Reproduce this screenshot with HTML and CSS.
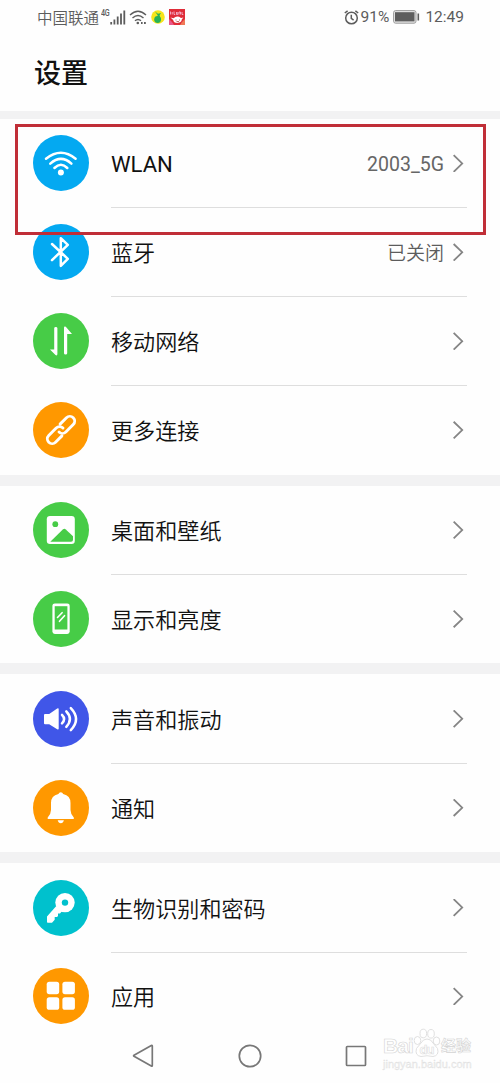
FILE: index.html
```html
<!DOCTYPE html>
<html lang="zh">
<head>
  <meta charset="UTF-8">
  <meta name="viewport" content="width=device-width, initial-scale=1.0">
  <title>设置</title>
  <link rel="stylesheet" href="styles.css">
</head>
<body>

  <!-- 状态栏 -->
  <div class="status">
    <span class="carrier">中国联通</span>
    <span class="net">4G</span>
    <svg class="signal" width="16" height="15" viewBox="0 0 16 15">
      <path d="M1.2 12v2.5M4.4 9.5v5M7.7 6.5v8M11 3.5v11M14.3.5v14" stroke="#5c5c5c" stroke-width="1.8"/>
    </svg>
    <svg class="wifi" width="18" height="15" viewBox="0 0 18 15" fill="none" stroke="#5c5c5c" stroke-width="1.4">
      <path d="M1 5Q9-2.6 17 5M3.5 8Q9 2.8 14.5 8M6 10.8Q9 8 12 10.8"/>
      <circle cx="8.8" cy="13" r="1.3" fill="#5c5c5c" stroke="none"/>
      <path d="M12 13h1.6M15 13h1.8" stroke-width="1.8"/>
    </svg>
    <svg class="music" width="14" height="14" viewBox="0 0 14 14">
      <circle cx="7" cy="7" r="6.8" fill="#f6e51b"/>
      <circle cx="6.6" cy="9.5" r="3.4" fill="#28b258"/>
      <path d="M4 1.5l3 2.2L10 3 8.6 5.3l1.2 4.5H8.2L6.3 4.8z" fill="#28b258"/>
    </svg>
    <svg class="shop" width="16" height="16" viewBox="0 0 16 16">
      <rect width="16" height="16" fill="#df2c38"/>
      <path d="M0 10l3 3 2 3H0z" fill="#e9588a"/>
      <path d="M16 10l-3 3-2 3h5z" fill="#ef7957"/>
      <path d="M1.5 2.5v3M3.2 3v2.5M5 2.5v3h1.2M7.5 3v2.5h1.3V3M10 5.5V3h1.5v2.5M13 3v2.5h1.3" stroke="#f3b6cf" stroke-width=".9" fill="none"/>
      <path d="M1.5 8.5l3 .8Q8 6 12 9l2.3-.6-1.5 2.2Q12.5 13.8 8.5 14 4.5 13.8 4.2 11z" fill="#fff"/>
      <path d="M7 10.5v1M10.5 10.5v1M7.5 12.6h2.5" stroke="#a33" stroke-width=".8"/>
    </svg>
    <svg class="alarm" width="15" height="15" viewBox="0 0 15 15" fill="none" stroke="#5c5c5c" stroke-width="1.5">
      <circle cx="7.5" cy="8" r="5.8"/>
      <path d="M7.3 4.8v3.6l2.3 1.7M.8 3L3.6.9M14.2 3L11.4.9"/>
    </svg>
    <span class="percent">91%</span>
    <svg class="battery" width="27" height="14" viewBox="0 0 27 14">
      <rect x=".6" y=".6" width="22.4" height="12.6" rx="2" fill="#e5e5e5" stroke="#9b9b9b"/>
      <rect x="2" y="2.2" width="19.5" height="9.2" fill="#5e5e5e"/>
      <path d="M25.3 3.5v7" stroke="#5e5e5e" stroke-width="1.6"/>
    </svg>
    <span class="time">12:49</span>
  </div>

  <h1>设置</h1>

  <div class="group">
    <div class="row">
      <svg class="icon blue" viewBox="0 0 56 56">
        <path d="M13 23.8Q28 11.8 42.6 23.8M17.3 28.6Q28 19.2 38.4 28.6M21.4 33Q28 26.6 34.3 33" class="line"/>
        <circle cx="27.9" cy="37.4" r="3"/>
      </svg>
      <div class="cell"><span class="name latin">WLAN</span><span class="value latin">2003_5G</span><i class="arrow"></i></div>
    </div>
    <div class="row">
      <svg class="icon blue" viewBox="0 0 56 56">
        <path d="M19 20L34.8 34.8 27.8 41.8V14.2L34.8 20.8 19 36.2" class="line"/>
      </svg>
      <div class="cell"><span class="name">蓝牙</span><span class="value">已关闭</span><i class="arrow"></i></div>
    </div>
    <div class="row">
      <svg class="icon green" viewBox="0 0 56 56">
        <path d="M21.2 15.2q0-1.3 1.6-1.3t1.6 1.3v25.6q0 2.3-1.9 1.3L17 36.5h4.2z"/>
        <path d="M34.2 40.3q0 1.3-1.6 1.3t-1.6-1.3V15q0-2 1.8-1.2L39 21h-4.8z"/>
      </svg>
      <div class="cell"><span class="name">移动网络</span><i class="arrow"></i></div>
    </div>
    <div class="row">
      <svg class="icon orange" viewBox="0 0 56 56">
        <g transform="rotate(-45 28 28)" class="line thick">
          <path d="M24.5 32.8H15.5a4.8 4.8 0 0 1 0-9.6H26a4.8 4.8 0 0 1 4.8 4.8"/>
          <path d="M31.5 23.2H40.5a4.8 4.8 0 0 1 0 9.6H30a4.8 4.8 0 0 1-4.8-4.8"/>
        </g>
      </svg>
      <div class="cell"><span class="name">更多连接</span><i class="arrow"></i></div>
    </div>
  </div>

  <div class="group">
    <div class="row">
      <svg class="icon green" viewBox="0 0 56 56">
        <rect x="13.8" y="14" width="28" height="28" rx="3.2"/>
        <circle cx="22.3" cy="22.2" r="2.9" class="hole"/>
        <path d="M17.3 39.8L29.8 27.4q1.5-1.4 3 0L40 34.2v3.6q0 2-2 2z" class="hole"/>
      </svg>
      <div class="cell"><span class="name">桌面和壁纸</span><i class="arrow"></i></div>
    </div>
    <div class="row">
      <svg class="icon green" viewBox="0 0 56 56">
        <rect x="19.4" y="12.4" width="17.3" height="30.6" rx="2.4"/>
        <rect x="21.7" y="15.2" width="12.7" height="23.3" class="hole"/>
        <path d="M24.5 26.5l4.6-4.8M26.5 30.3l5-5.6" class="line thin"/>
      </svg>
      <div class="cell"><span class="name">显示和亮度</span><i class="arrow"></i></div>
    </div>
  </div>

  <div class="group">
    <div class="row">
      <svg class="icon indigo" viewBox="0 0 56 56">
        <path d="M12 23h4.2l8-5.6q1.5-.8 1.5.8v19.3q0 1.6-1.5.8l-8-5.1H12q-1 0-1-1v-8.2q0-1 1-1z"/>
        <path d="M29 23.8q4.2 4.2 0 8.6M33.3 20.4q7.2 7.7 0 15.4M37.8 17.1q10.5 11 0 22" class="line"/>
      </svg>
      <div class="cell"><span class="name">声音和振动</span><i class="arrow"></i></div>
    </div>
    <div class="row">
      <svg class="icon orange" viewBox="0 0 56 56">
        <path d="M27.8 12.2q1.7 0 2.4 1.9 7.3 1.7 7.3 8.9v7q0 4 3.3 7.4v1.5H14.7v-1.5q3.3-3.4 3.3-7.4v-7q0-7.2 7.4-8.9.7-1.9 2.4-1.9z"/>
        <path d="M24.7 40.2h6.2q-.8 3-3.1 3t-3.1-3z"/>
      </svg>
      <div class="cell"><span class="name">通知</span><i class="arrow"></i></div>
    </div>
  </div>

  <div class="group">
    <div class="row">
      <svg class="icon cyan" viewBox="0 0 56 56">
        <path d="M23.3 26L14 36.5v5.5q0 .8.8.8h4.2l2.7-3v-2.8h2.3l1-1v-2.5h2l3-3.5z"/>
        <circle cx="32" cy="22.6" r="9.7"/>
        <circle cx="32" cy="22.6" r="3.2" class="hole"/>
      </svg>
      <div class="cell"><span class="name">生物识别和密码</span><i class="arrow"></i></div>
    </div>
    <div class="row">
      <svg class="icon orange" viewBox="0 0 56 56">
        <rect x="13.7" y="13.7" width="12.5" height="12.5" rx="2.6"/>
        <rect x="29.4" y="13.7" width="12.5" height="12.5" rx="2.6"/>
        <rect x="13.7" y="29.3" width="12.5" height="12.5" rx="2.6"/>
        <rect x="29.4" y="29.3" width="12.5" height="12.5" rx="2.6"/>
      </svg>
      <div class="cell"><span class="name">应用</span><i class="arrow"></i></div>
    </div>
  </div>

  <!-- 底部导航 -->
  <div class="nav">
    <svg width="24" height="26" viewBox="0 0 24 26"><path d="M2 12.3L19.3 2.5q1-.5 1 .6v19.4q0 1.1-1 .6L2 13.3q-.8-.5 0-1z"/></svg>
    <svg width="24" height="26" viewBox="0 0 24 26"><circle cx="12" cy="13" r="10.7"/></svg>
    <svg width="24" height="26" viewBox="0 0 24 26"><rect x="2.5" y="3.5" width="19" height="19" rx=".8"/></svg>
  </div>

  <!-- WLAN 标注框 -->
  <div class="mark"></div>

  <div class="watermark">
    <div class="brand">
      <span>Bai</span>
      <svg width="28" height="30" viewBox="0 0 28 30">
        <ellipse cx="4.5" cy="12.5" rx="3.3" ry="4"/>
        <ellipse cx="10.3" cy="5.5" rx="3.3" ry="4.3"/>
        <ellipse cx="18" cy="5.8" rx="3.3" ry="4.3"/>
        <ellipse cx="23.5" cy="13" rx="3.3" ry="4"/>
        <path d="M14 11q4 0 6 4l4.5 5.5q2 7-4.5 8-6-1.5-12 0-6.5-1-4.5-8L8 15q2-4 6-4z"/>
        <text x="6.5" y="26">du</text>
      </svg>
      <span class="cn">经验</span>
    </div>
    <div class="site">jingyan.baidu.com</div>
  </div>

</body>
</html>
```
FILE: styles.css
```css
body {
  margin: 0;
  width: 500px;
  height: 1083px;
  position: relative;
  overflow: hidden;
  background-color: #fefefe;
  color: #111;
  font-family: Roboto, "Noto Sans CJK SC", sans-serif;
}
.status {
  display: flex;
  align-items: center;
  height: 34px;
  padding: 0 36px 0 37px;
  font-size: 15.5px;
  color: #5c5c5c;
}
.status svg {
  flex: none;
}
.carrier {
  margin-top: -1px;
  font-weight: 350;
}
.net {
  margin: -9px 0 0 2px;
  font-size: 9px;
  font-weight: 500;
  line-height: 8px;
  width: 11px;
  letter-spacing: -0.3px;
  transform: scaleX(0.8);
  transform-origin: left;
}
.signal {
  margin-left: -2px;
}
.wifi {
  margin-left: 3px;
}
.music {
  margin-left: 4px;
}
.shop {
  margin-left: 4px;
}
.alarm {
  margin-left: auto;
}
.percent {
  margin-left: 2px;
}
.battery {
  margin: 0 5px 0 4px;
}
h1 {
  margin: 0;
  height: 77px;
  padding-left: 34px;
  font-size: 27px;
  font-weight: 500;
  line-height: 80px;
  box-sizing: border-box;
}
.group {
  border-top: 11px solid #f2f2f3;
}
h1 + .group {
  border-top-width: 8px;
}
.row {
  display: flex;
  align-items: center;
  height: 88.9px;
  padding: 0 33px;
}
.icon {
  width: 56px;
  height: 56px;
  flex: none;
  border-radius: 50%;
  fill: #fff;
}
.line {
  fill: none;
  stroke: #fff;
  stroke-width: 2.5;
  stroke-linecap: round;
  stroke-linejoin: round;
}
.thin {
  stroke-width: 1.6;
}
.thick {
  stroke-width: 2.9;
}
.blue {
  background-color: #04a9f1;
}
.green {
  background-color: #47cc47;
}
.green .hole {
  fill: #47cc47;
}
.orange {
  background-color: #ff9800;
}
.indigo {
  background-color: #4056e8;
}
.cyan {
  background-color: #00c1cd;
}
.cyan .hole {
  fill: #00c1cd;
}
.cell {
  display: flex;
  align-items: center;
  flex: 1;
  box-sizing: border-box;
  height: 100%;
  margin: 1px 0 0 22px;
  padding-right: 3px;
  border-bottom: 1px solid #dedede;
}
.row:last-child .cell {
  border-bottom-color: transparent;
}
.name {
  flex: 1;
  padding-top: 2px;
  font-size: 22.1px;
  font-weight: 350;
  line-height: 32px;
}
.name.latin {
  font-weight: 400;
}
.value {
  margin: -1px 9px 0 0;
  font-size: 19px;
  font-weight: 350;
  color: #5c5c5c;
}
.value.latin {
  margin-top: 0;
  padding-top: 2px;
  font-size: 19.5px;
  font-weight: 400;
  color: #666;
}
.arrow {
  width: 11px;
  height: 18px;
  background-color: #858585;
  clip-path: polygon(0 1.3px, 1.3px 0, 10.5px 9px, 1.3px 18px, 0 16.7px, 8px 9px);
}
.nav {
  display: flex;
  justify-content: center;
  gap: 82px;
  padding-top: 2px;
}
.nav svg {
  fill: none;
  stroke: #777;
  stroke-width: 1.7;
}
.mark {
  position: absolute;
  left: 15px;
  top: 124px;
  width: 465px;
  height: 105px;
  border: 3px solid #c02e37;
}
.watermark {
  position: absolute;
  left: 383px;
  top: 1028px;
  color: #fff;
  font-family: "Liberation Sans", "Noto Sans CJK SC", sans-serif;
  -webkit-text-stroke: 0.6px #d4d4d4;
}
.brand {
  display: flex;
  align-items: flex-end;
  height: 30px;
  font-size: 21px;
  font-weight: 700;
  line-height: 24px;
  letter-spacing: -0.9px;
}
.brand svg {
  fill: #fff;
  stroke: #dcdcdc;
  stroke-width: 0.9;
}
.brand text {
  font-size: 13px;
  stroke-width: 0.6;
}
.cn {
  font-size: 15px;
  letter-spacing: 0;
}
.site {
  color: #f0f0f0;
  font-size: 11px;
  line-height: 13px;
  -webkit-text-stroke: 0.3px #dedede;
}
```
